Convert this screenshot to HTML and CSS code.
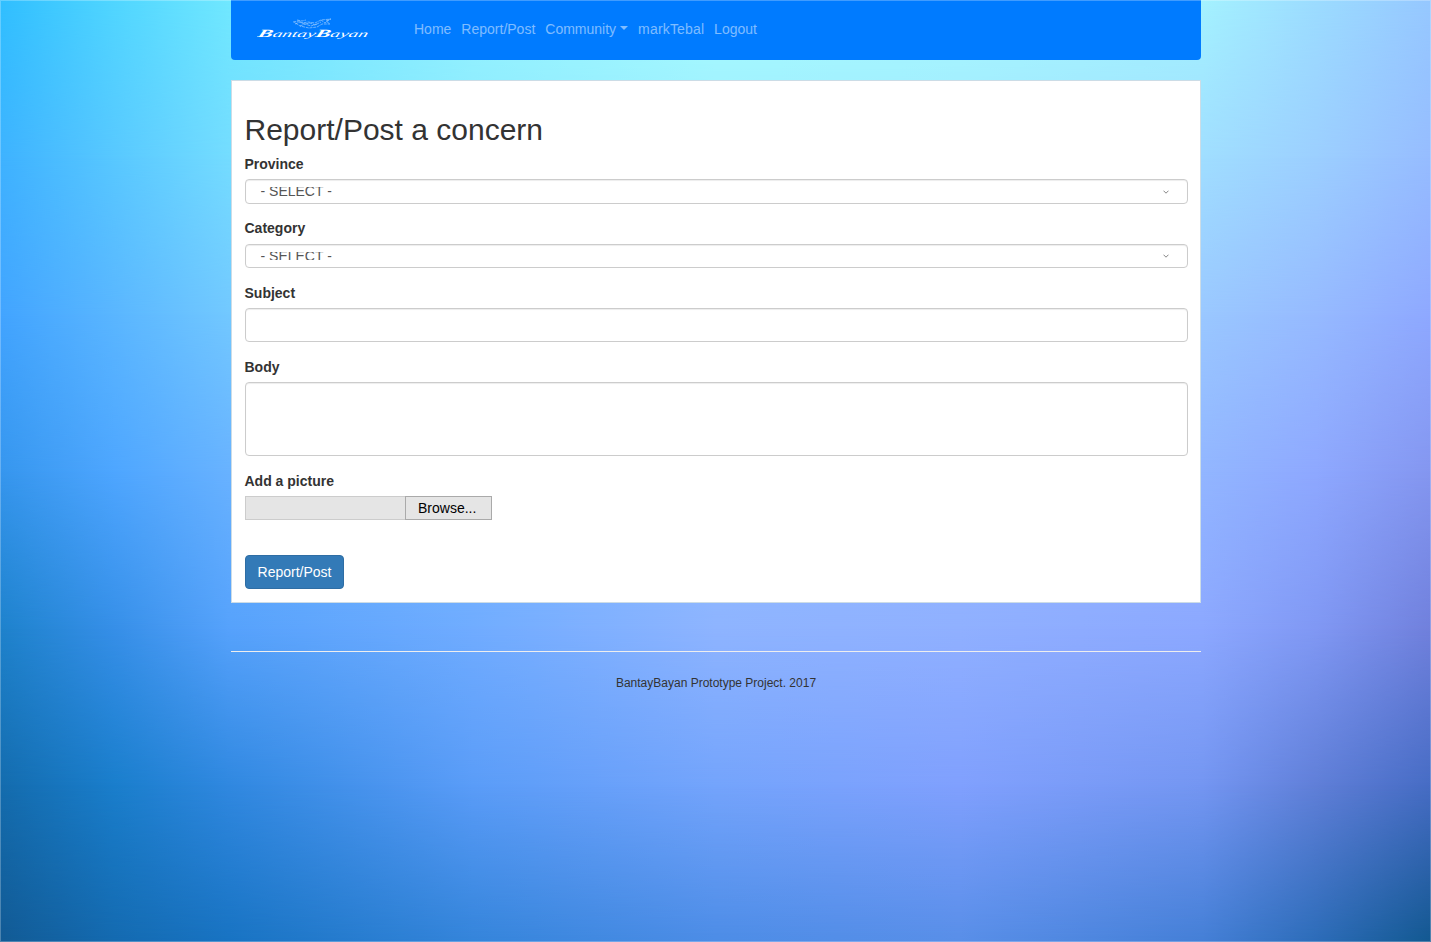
FILE: index.html
```html
<!DOCTYPE html>
<html lang="en">
<head>
<meta charset="utf-8">
<title>BantayBayan</title>
<link rel="stylesheet" href="styles.css">
</head>
<body>
<div class="backdrop"><i class="b0"></i><i class="b1"></i><i class="b2"></i><i class="b3"></i><i class="b4"></i><i class="b5"></i><i class="b6"></i></div>
<div class="container">
  <nav class="navbar">
    <a class="brand">
      <svg width="114" height="28" viewBox="0 0 114 28">
        <g class="bird"><path d="M36 7l6-1 3 2 6-1 7 1 6-3 10-1-5 2 4 3-8 0-5 3-8 1-9-2-6-4"/><path d="M38 9l5-2 5 2 5-1 5 2 6-3M43 11l5-2 6 2 6-2M64 5l4 3 5-4M40 5l5 1 4-1"/></g>
        <text class="wordmark" transform="translate(0 22) skewX(-20) scale(1.55 1)" textLength="71" lengthAdjust="spacingAndGlyphs"><tspan class="cap">B</tspan>antay<tspan class="cap">B</tspan>ayan</text>
      </svg>
    </a>
    <a>Home</a><a>Report/Post</a><a>Community<span class="caret"></span></a><a class="user">markTebal</a><a>Logout</a>
  </nav>
  <main class="panel">
    <h1>Report/Post a concern</h1>
    <label>Province</label>
    <div class="field select"><span class="value">- SELECT -</span><svg class="chev" width="6" height="4" viewBox="0 0 6 4"><path d="M.5 .7L3 3.2 5.500 .7"/></svg></div>
    <label>Category</label>
    <div class="field select short"><span class="value">- SELECT -</span><svg class="chev" width="6" height="4" viewBox="0 0 6 4"><path d="M.5 .7L3 3.2 5.500 .7"/></svg></div>
    <label>Subject</label>
    <div class="field subject"></div>
    <label>Body</label>
    <div class="field body"></div>
    <label>Add a picture</label>
    <div class="file"><span class="path"></span><span class="browse">Browse...</span></div>
    <button class="submit">Report/Post</button>
  </main>
  <footer>BantayBayan Prototype Project. 2017</footer>
</div>
<div class="frame"></div>
</body>
</html>
```
FILE: styles.css
```css
* { box-sizing: border-box; }
body { margin: 0; height: 942px; overflow: hidden; font: 14px/20px "Liberation Sans", Arial, sans-serif; color: #333; }
.backdrop, .backdrop i, .frame { position: absolute; inset: 0; }
.backdrop { z-index: -1; }
/* Each layer fades in over the band that ends at its own height. */
.b0 { background: linear-gradient(90deg, #30bfff 0, #50d6ff 8%, #70e8ff 16%, #94f4ff 33%, #a8feff 50%, #a8faff 67%, #a4f2ff 84%, #9cdcff 92%, #96c8ff); }
.b1 { background: linear-gradient(90deg, #3eb2ff 0, #58c8ff 8%, #74dcff 16%, #8ce8ff 33%, #9ceaff 50%, #a0e6ff 67%, #a0deff 84%, #9ccfff 92%, #96bcff); }
.b2 { background: linear-gradient(90deg, #42a4ff 0, #5ab6ff 8%, #72c8ff 16%, #84d0ff 33%, #94d0ff 50%, #98ccff 67%, #9ac8ff 84%, #96baff 92%, #8ea8ff); }
.b3 { background: linear-gradient(90deg, #3696ee 0, #4ea6ff 8%, #68b2ff 16%, #78b8ff 33%, #8cbcff 50%, #92b8ff 67%, #92b6ff 84%, #8ea8ff 92%, #8496f0); }
.b4 { background: linear-gradient(90deg, #1e82cc 0, #368fe8 8%, #56a2fc 16%, #70acff 33%, #8eb4ff 50%, #90b0ff 67%, #8ca8ff 84%, #8098f4 92%, #7080dc); }
.b5 { background: linear-gradient(90deg, #146cae 0, #1a7ecc 8%, #3088e0 16%, #5a9cf8 33%, #74a4fc 50%, #80a0fe 67%, #7496f2 84%, #607fd8 92%, #466cc4); }
.b6 { background: linear-gradient(90deg, #125a94 0, #146ab0 8%, #1873c2 16%, #3484da 33%, #4c8ce6 50%, #588ee8 67%, #447fd6 84%, #2c6cb8 92%, #125890); }
.b1 { mask-image: linear-gradient(transparent 0, #000 16.7%); }
.b2 { mask-image: linear-gradient(transparent 16.7%, #000 33.3%); }
.b3 { mask-image: linear-gradient(transparent 33.3%, #000 50%); }
.b4 { mask-image: linear-gradient(transparent 50%, #000 66.7%); }
.b5 { mask-image: linear-gradient(transparent 66.7%, #000 83.3%); }
.b6 { mask-image: linear-gradient(transparent 83.3%, #000 100%); }
.container { width: 970px; margin: 0 auto 0 231px; }
.navbar { height: 60px; background: #007bff; border-radius: 0 0 4px 4px; display: flex; align-items: flex-start; gap: 10px; padding: 19px 0 0 26px; color: rgba(255,255,255,.5); }
.brand { width: 147px; height: 28px; margin-top: -4px; }
.bird { fill: none; stroke: #fff; stroke-width: .6; stroke-dasharray: 3 .8; opacity: .7; }
.wordmark { font: italic 9.5px "Liberation Serif", serif; fill: #fff; }
.cap { font-weight: 700; font-size: 11px; }
.user { width: 66px; letter-spacing: .18px; }
.caret { display: inline-block; margin-left: 4px; vertical-align: 4px; border: 4px solid transparent; border-top-color: currentColor; border-bottom: 0; }
.panel { margin-top: 20px; height: 523px; background: #fff; border: 1px solid #ccdce6; padding: 32px 12px 0 13px; display: flex; flex-direction: column; }
h1 { font-size: 30px; line-height: 33px; font-weight: 400; margin: 0 0 8px -.5px; }
label { font-weight: 700; line-height: 20px; margin: 0 0 5px -.5px; }
.field { width: 943px; border: 1px solid #ccc; border-radius: 4px; box-shadow: inset 0 1px 1px rgba(0,0,0,.075); flex: none; background: #fff; }
.select { height: 25px; margin-bottom: 14px; padding: 0 18px 0 14.5px; display: flex; justify-content: space-between; align-items: center; color: #555; }
.short { height: 24px; margin: 1px 0 15px; }
.value { line-height: 23px; clip-path: inset(7px 0 7px 0); }
.short .value { line-height: 22px; clip-path: inset(7px 0 7px 0); }
.chev { fill: none; stroke: #777; stroke-width: .9; }
.subject { height: 34px; margin-bottom: 15px; }
.body { height: 74px; margin-bottom: 15px; }
.file { display: flex; height: 24px; width: 247px; color: #000; }
.path { width: 160px; border: 1px solid #ccc; border-right: 0; background: #e5e5e5; }
.browse { width: 87px; border: 1px solid #aaa; background: #e5e5e5; padding-left: 12px; line-height: 22px; }
.submit { width: 99px; height: 34px; margin-top: 35px; padding: 0; border: 1px solid #2e6da4; border-radius: 4px; background: #337ab7; color: #fff; font: inherit; }
footer { margin-top: 48px; border-top: 1px solid #eee; padding-top: 21px; text-align: center; font-size: 12px; }
.frame { border: 1px solid rgba(255,255,255,.25); pointer-events: none; }
```
